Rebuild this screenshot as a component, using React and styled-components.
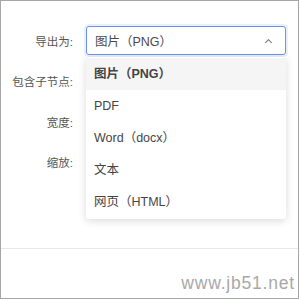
import React from "react";
import styled, { createGlobalStyle } from "styled-components";

const GlobalStyle = createGlobalStyle`
  body {
    margin: 0;
    background: #fff;
    font-family: "Liberation Sans", "Noto Sans CJK SC", sans-serif;
  }
`;

const formats = ["图片（PNG）", "PDF", "Word（docx）", "文本", "网页（HTML）"];

function ExportDialog() {
  return (
    <Frame>
      <GlobalStyle />
      <Form>
        <Row>
          <Label>导出为:</Label>
          <Select>
            <span>{formats[0]}</span>
            <Caret viewBox="0 0 10 6">
              <path d="M1.5 5 L5 1.5 L8.5 5" />
            </Caret>
            <Menu>
              {formats.map((f, i) => (
                <Option key={f} selected={i === 0}>
                  {f}
                </Option>
              ))}
            </Menu>
          </Select>
        </Row>
        <Row>
          <Label>包含子节点:</Label>
          <span />
        </Row>
        <Row>
          <Label>宽度:</Label>
          <span />
        </Row>
        <Row>
          <Label>缩放:</Label>
          <span />
        </Row>
      </Form>

      <Footer>
        <Watermark>www.jb51.net</Watermark>
      </Footer>
    </Frame>
  );
}

const Frame = styled.div`
  width: 299px;
  height: 299px;
  box-sizing: border-box;
  border: 1px solid #a6a6a6;
  display: flex;
  flex-direction: column;
`;

const Form = styled.div`
  flex: 1;
  display: flex;
  flex-direction: column;
  gap: 11.5px;
  padding-top: 25px;
`;

const Row = styled.div`
  display: grid;
  grid-template-columns: 72px 200px;
  column-gap: 13px;
  align-items: center;
  height: 29px;
`;

const Label = styled.label`
  text-align: right;
  font-size: 11.5px;
  color: #555;
`;

const Select = styled.div`
  position: relative;
  height: 29px;
  box-sizing: border-box;
  border: 1px solid #6a93ee;
  border-radius: 3px;
  box-shadow: 0 0 0 2px rgba(106, 147, 238, 0.15);
  display: flex;
  align-items: center;
  justify-content: space-between;
  padding: 0 12px 0 8px;
  font-size: 12.5px;
  color: #4a4a4a;
`;

const Caret = styled.svg`
  width: 9px;
  height: 6px;
  fill: none;
  stroke: #777;
  stroke-width: 1.2;
`;

const Menu = styled.ul`
  position: absolute;
  top: 30px;
  left: -1px;
  width: 200px;
  margin: 0;
  padding: 1px 0;
  list-style: none;
  background: #fff;
  border-radius: 3px;
  box-shadow: 0 2px 8px rgba(0, 0, 0, 0.15);
  z-index: 2;
`;

const Option = styled.li`
  height: 32px;
  line-height: 32px;
  padding: 0 8px;
  font-size: 12.5px;
  color: #444;
  background: ${(p) => (p.selected ? "#f5f5f5" : "transparent")};
  font-weight: ${(p) => (p.selected ? 700 : 400)};
`;

const Footer = styled.div`
  height: 45px;
  border-top: 1px solid #e8e8e8;
  display: flex;
  justify-content: flex-end;
  align-items: flex-end;
  padding: 0 3px 4px 0;
`;

const Watermark = styled.span`
  font-family: "Liberation Sans", Arial, sans-serif;
  font-size: 17.5px;
  letter-spacing: 0.8px;
  color: #a8a8a8;
`;

export default ExportDialog;
